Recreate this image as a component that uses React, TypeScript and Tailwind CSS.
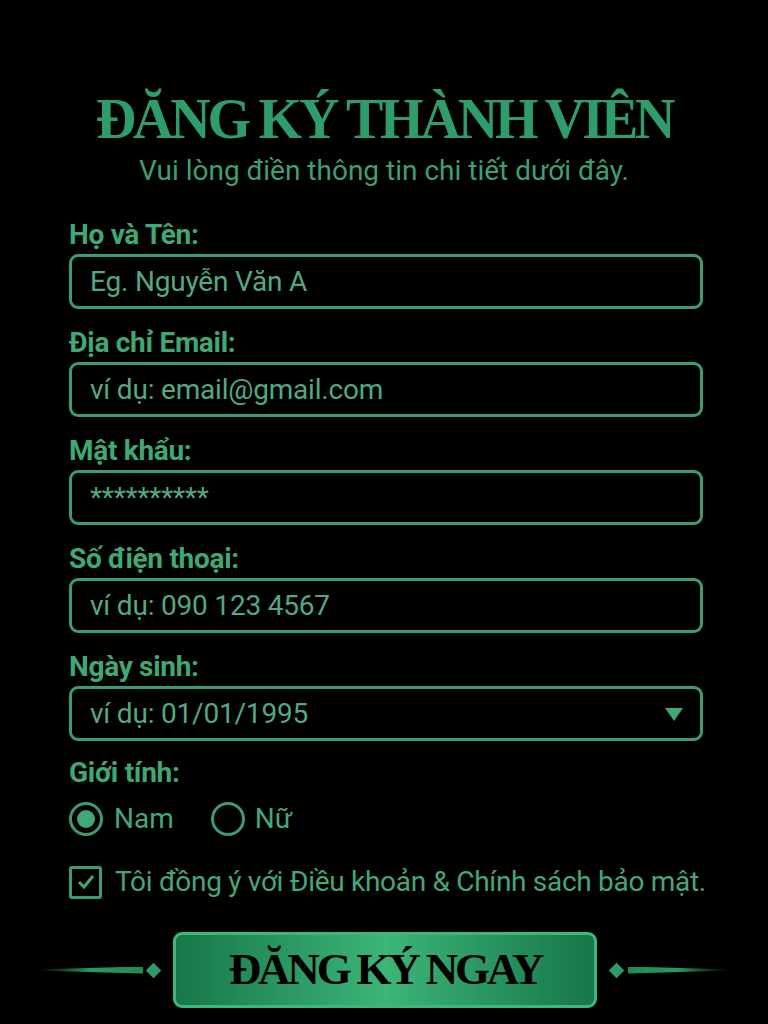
import React from "react";

const sans = { fontFamily: "Roboto, 'Noto Sans', sans-serif" } as const;
const serif = { fontFamily: "'Liberation Serif', 'DejaVu Serif', serif" } as const;

function Field({ label, placeholder, select }: { label: string; placeholder: string; select?: boolean }) {
  return (
    <div className="flex flex-col">
      <div className="text-[28px] font-bold leading-[32px] text-[#3fa874] tracking-[-0.3px] h-[38px] flex items-center">{label}</div>
      <div className="h-[55px] rounded-[9px] border-[3px] border-[#3c9c71] flex items-center justify-between pl-[18px] pr-[16px]">
        <span className="text-[28px] text-[#52a883] tracking-[-0.2px]">{placeholder}</span>
        {select && (
          <svg width="20" height="16" viewBox="0 0 20 16">
            <polygon points="1,2 19,2 10,15" fill="#3fa874" />
          </svg>
        )}
      </div>
    </div>
  );
}

export default function App() {
  return (
    <div className="w-[768px] h-[1024px] bg-black overflow-hidden flex flex-col items-center" style={sans}>
      <h1 className="mt-[89px] text-[56px] font-bold leading-[60px] text-[#2f9d6b] tracking-[-3.2px]" style={serif}>
        ĐĂNG KÝ THÀNH VIÊN
      </h1>
      <p className="mt-[5px] text-[28px] leading-[34px] text-[#3f9e74]">Vui lòng điền thông tin chi tiết dưới đây.</p>
      <div className="w-[634px] ml-[4px] mt-[28px] flex flex-col gap-[15px]">
        <Field label="Họ và Tên:" placeholder="Eg. Nguyễn Văn A" />
        <Field label="Địa chỉ Email:" placeholder="ví dụ: email@gmail.com" />
        <Field label="Mật khẩu:" placeholder="**********" />
        <Field label="Số điện thoại:" placeholder="ví dụ: 090 123 4567" />
        <Field label="Ngày sinh:" placeholder="ví dụ: 01/01/1995" select />
      </div>
      <div className="w-[634px] ml-[4px] mt-[16px] flex flex-col">
        <div className="text-[28px] font-bold leading-[32px] text-[#3fa874] tracking-[-0.3px]">Giới tính:</div>
        <div className="mt-[9px] flex items-center">
          <div className="w-[34px] h-[34px] rounded-full border-[3px] border-[#3c9c71] flex items-center justify-center">
            <div className="w-[18px] h-[18px] rounded-full bg-[#3fa874]" />
          </div>
          <span className="ml-[11px] text-[28px] text-[#45a67a]">Nam</span>
          <div className="ml-[37px] w-[34px] h-[34px] rounded-full border-[3px] border-[#3c9c71]" />
          <span className="ml-[10px] text-[28px] text-[#45a67a]">Nữ</span>
        </div>
        <div className="mt-[21px] flex items-center">
          <div className="shrink-0 w-[33px] h-[33px] rounded-[3px] border-[3px] border-[#3c9c71] flex items-center justify-center">
            <svg width="20" height="18" viewBox="0 0 20 18">
              <polyline points="3,9 8,14 17,3" fill="none" stroke="#3fa874" strokeWidth="3" />
            </svg>
          </div>
          <span className="ml-[13px] whitespace-nowrap text-[28px] text-[#45a67a] tracking-[-0.3px]">Tôi đồng ý với Điều khoản &amp; Chính sách bảo mật.</span>
        </div>
      </div>
      <div className="mt-[29px] w-[700px] ml-[12px] flex items-center">
        <div className="flex items-center">
          <div className="w-[103px] h-[7px] bg-gradient-to-r from-transparent via-[#2a9a60] to-[#1f8a55] [clip-path:polygon(0_40%,100%_0,100%_100%,0_60%)]" />
          <div className="ml-[5px] w-[11px] h-[11px] rotate-45 bg-[#2e9a68]" />
        </div>
        <div className="ml-[14px] w-[424px] h-[76px] rounded-[9px] border-[3px] border-[#3db87b] bg-gradient-to-r from-[#17774a] via-[#3cb578] to-[#17774a] flex items-center justify-center">
          <span className="text-[45px] font-bold text-black tracking-[-3.2px]" style={serif}>ĐĂNG KÝ NGAY</span>
        </div>
        <div className="ml-[14px] flex items-center">
          <div className="w-[11px] h-[11px] rotate-45 bg-[#2e9a68]" />
          <div className="ml-[6px] w-[98px] h-[7px] bg-gradient-to-l from-transparent via-[#2a9a60] to-[#1f8a55] [clip-path:polygon(0_0,100%_40%,100%_60%,0_100%)]" />
        </div>
      </div>
    </div>
  );
}
